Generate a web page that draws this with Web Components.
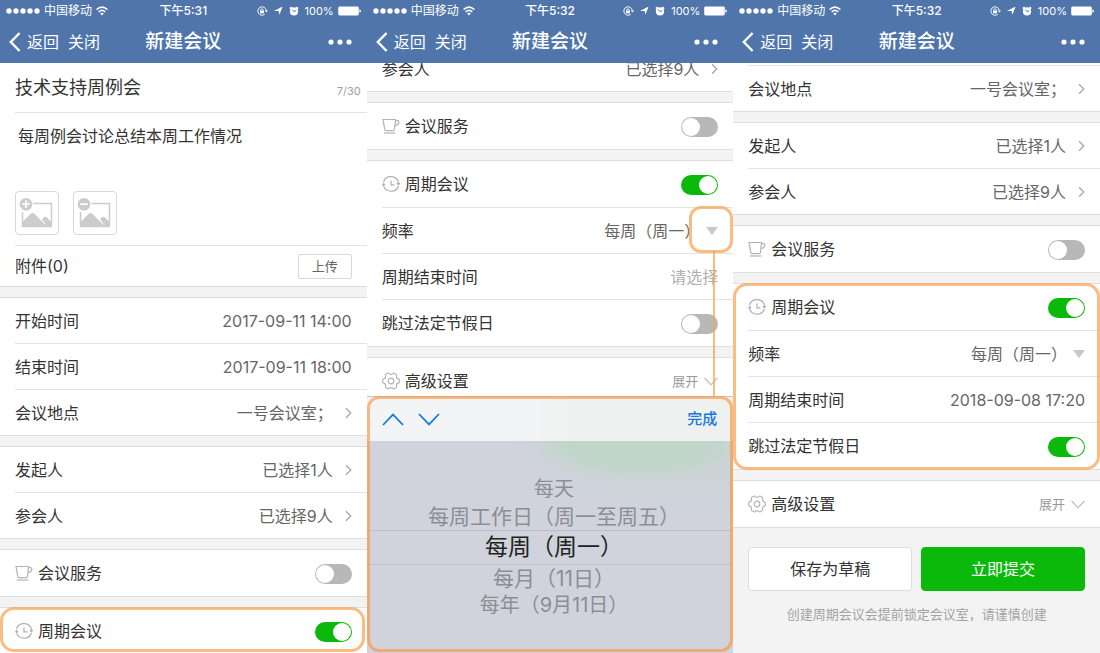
<!DOCTYPE html>
<html lang="zh-CN">
<head>
<meta charset="utf-8">
<meta name="viewport" content="width=device-width, initial-scale=1">
<title>新建会议</title>
<style>
  body {
    margin: 0;
    background: #f3f3f3;
    color: #333;
    font-family: Inter, "Noto Sans CJK SC", sans-serif;
    font-size: 16px;
    line-height: 24px;
  }
  main {
    display: grid;
    grid-template-columns: repeat(3, minmax(0, 1fr));
    height: 100vh;
  }
</style>
</head>
<body>
<main>
  <phone-screen time="下午5:31">
    <form-group flush>
      <title-row value="技术支持周例会" count="7/30"></title-row>
      <note-row value="每周例会讨论总结本周工作情况"></note-row>
      <upload-row>附件(0)</upload-row>
    </form-group>
    <form-group>
      <text-row value="2017-09-11 14:00">开始时间</text-row>
      <text-row value="2017-09-11 18:00">结束时间</text-row>
      <link-row value="一号会议室；">会议地点</link-row>
    </form-group>
    <form-group>
      <link-row value="已选择1人">发起人</link-row>
      <link-row value="已选择9人">参会人</link-row>
    </form-group>
    <form-group>
      <switch-row><ui-icon slot="icon" name="cup"></ui-icon>会议服务</switch-row>
    </form-group>
    <callout-frame style="--callout-inset: 0 2px 3px 0">
      <form-group>
        <switch-row on><ui-icon slot="icon" name="clock"></ui-icon>周期会议</switch-row>
      </form-group>
    </callout-frame>
  </phone-screen>

  <phone-screen time="下午5:32" style="--scrolled: 18px">
    <form-group>
      <link-row value="已选择9人">参会人</link-row>
    </form-group>
    <form-group>
      <switch-row><ui-icon slot="icon" name="cup"></ui-icon>会议服务</switch-row>
    </form-group>
    <form-group>
      <switch-row on><ui-icon slot="icon" name="clock"></ui-icon>周期会议</switch-row>
      <select-row value="每周（周一）" marked>频率</select-row>
      <text-row placeholder="请选择">周期结束时间</text-row>
      <switch-row>跳过法定节假日</switch-row>
    </form-group>
    <form-group>
      <expand-row><ui-icon slot="icon" name="gear"></ui-icon>高级设置</expand-row>
    </form-group>
    <wheel-picker slot="sheet"></wheel-picker>
  </phone-screen>

  <phone-screen time="下午5:32">
    <form-group flush>
      <link-row value="一号会议室；" continued>会议地点</link-row>
    </form-group>
    <form-group>
      <link-row value="已选择1人">发起人</link-row>
      <link-row value="已选择9人">参会人</link-row>
    </form-group>
    <form-group>
      <switch-row><ui-icon slot="icon" name="cup"></ui-icon>会议服务</switch-row>
    </form-group>
    <callout-frame>
      <form-group>
        <switch-row on><ui-icon slot="icon" name="clock"></ui-icon>周期会议</switch-row>
        <select-row value="每周（周一）">频率</select-row>
        <text-row value="2018-09-08 17:20">周期结束时间</text-row>
        <switch-row on>跳过法定节假日</switch-row>
      </form-group>
    </callout-frame>
    <form-group>
      <expand-row><ui-icon slot="icon" name="gear"></ui-icon>高级设置</expand-row>
    </form-group>
    <submit-bar>创建周期会议会提前锁定会议室，请谨慎创建</submit-bar>
  </phone-screen>
</main>

<script>
const ICONS = {
  cup: [18, 18, `<g fill="none" stroke="#b4b4b4" stroke-width="1.2"><path d="M1 2.5H13.6L12.4 12.6Q12.2 13.6 11.2 13.6H4Q3 13.6 2.8 12.6Z"/><path d="M13.5 3.6H15.4Q17 3.6 16.8 5.4Q16.4 8 13.2 8.6"/><path d="M2 16H13.4"/></g>`],
  clock: [18, 18, `<g fill="none" stroke="#b0b0b0" stroke-width="1.2"><path d="M1.5 7A7.8 7.8 0 0 1 16.6 8"/><path d="M16.4 11A7.8 7.8 0 0 1 1.4 10"/><path d="M9 5.4V9.8H12.4"/></g><path d="M14.3 8H18.4L16.4 10.8ZM-.2 10.2H3.6L1.6 7.4Z" fill="#b0b0b0"/>`],
  gear: [18, 18, `<g fill="none" stroke="#b4b4b4" stroke-width="1.2" stroke-linejoin="round"><path d="M5.6 1.2Q6.6.7 7.3 1.6Q9 3.2 10.7 1.6Q11.4.7 12.4 1.2L14 2.2Q14.8 2.8 14.5 3.8Q14 6.2 16.2 6.8Q17.3 7 17.3 8.1V9.9Q17.3 11 16.2 11.2Q14 11.8 14.5 14.2Q14.8 15.2 14 15.8L12.4 16.8Q11.4 17.3 10.7 16.4Q9 14.8 7.3 16.4Q6.6 17.3 5.6 16.8L4 15.8Q3.2 15.2 3.5 14.2Q4 11.8 1.8 11.2Q.7 11 .7 9.9V8.1Q.7 7 1.8 6.8Q4 6.2 3.5 3.8Q3.2 2.8 4 2.2Z"/><circle cx="9" cy="9" r="2.8"/></g>`],
  chevron: [7, 12, `<path d="M1 1.2 5.8 6 1 10.8" fill="none" stroke="#a8a8a8" stroke-width="1.3"/>`],
  expand: [14, 9, `<path d="M.6 1 7 7.8 13.4 1" fill="none" stroke="#bbb" stroke-width="1.1"/>`],
  triangle: [12, 8, `<path d="M0 0H12L6 8Z" fill="#c8c8c8"/>`],
  back: [12, 20, `<path d="M10.6 1 1.8 10 10.6 19" fill="none" stroke="#fff" stroke-width="2.4"/>`],
  more: [24, 6, `<g fill="#fff"><circle cx="3" cy="3" r="2.6"/><circle cx="12" cy="3" r="2.6"/><circle cx="21" cy="3" r="2.6"/></g>`],
  signal: [34, 6, `<g fill="#fff"><circle cx="3" cy="3" r="2.7"/><circle cx="10" cy="3" r="2.7"/><circle cx="17" cy="3" r="2.7"/><circle cx="24" cy="3" r="2.7"/><circle cx="31" cy="3" r="2.7"/></g>`],
  wifi: [12, 10, `<g fill="none" stroke="#fff" stroke-width="1.5"><path d="M.6 3.6Q6-1.4 11.4 3.6"/><path d="M2.7 6Q6 2.8 9.3 6"/></g><path d="M6 9.4 4.2 7.5Q6 6 7.8 7.5Z" fill="#fff"/>`],
  lock: [11, 10, `<path d="M9.2 4.2A4.2 4.2 0 1 0 7.8 8.2" fill="none" stroke="#fff"/><path d="M7.7 4.4H11L9.4 6.6Z" fill="#fff"/><rect x="3" y="4.5" width="4" height="2.8" fill="#fff"/><path d="M3.8 4.6V3.8Q3.8 2.8 5 2.8T6.2 3.8V4.6" fill="none" stroke="#fff" stroke-width=".8"/>`],
  locate: [9, 9, `<path d="M0 5 8.6.4 5.4 8.8 4.6 5Z" fill="#fff"/>`],
  alarm: [10, 10, `<circle cx="5" cy="5.4" r="4.1" fill="#fff"/><path d="M.8 2.6 2.6 1.2M9.2 2.6 7.4 1.2" stroke="#fff" stroke-width="1.5"/><path d="M3.4 3.6 5 5.6 7.2 4.6" fill="none" stroke="#4f75aa" stroke-width="1"/>`],
  battery: [23, 10, `<rect x=".2" y=".5" width="20.6" height="9" rx="1.4" fill="#fff"/><path d="M21.4 3.3Q23 3.7 23 5T21.4 6.7Z" fill="#fff"/>`],
  photoAdd: [42, 42, `<path d="M17.4 11.5H35.5V34M6.5 34V20" fill="none" stroke="#ccc" stroke-width="1.5"/><path d="M6 30.5 14.5 21.9Q16.5 20 18.6 21.9L29 32.4H30L26 27.8Q28.2 23.2 31 25.4L36 30.5V35.3H6Z" fill="#ccc"/><circle cx="10" cy="12.2" r="6.3" fill="#ccc"/><path d="M6.2 12.2H13.8M10 8.4V16" stroke="#fff" stroke-width="1.7"/>`],
  photoRemove: [42, 42, `<path d="M17.4 11.5H35.5V34M6.5 34V20" fill="none" stroke="#ccc" stroke-width="1.5"/><path d="M6 30.5 14.5 21.9Q16.5 20 18.6 21.9L29 32.4H30L26 27.8Q28.2 23.2 31 25.4L36 30.5V35.3H6Z" fill="#ccc"/><circle cx="10" cy="12.2" r="6.3" fill="#ccc"/><path d="M6.2 12.2H13.8" stroke="#fff" stroke-width="1.7"/>`],
  up: [22, 13, `<path d="M1 12 11 1.6 21 12" fill="none" stroke="#1579e0" stroke-width="1.7"/>`],
  down: [22, 13, `<path d="M1 1 11 11.4 21 1" fill="none" stroke="#1579e0" stroke-width="1.7"/>`]
};

const RESET = `
  * { box-sizing: border-box; }
  button, input, textarea, select {
    margin: 0; padding: 0; border: 0; border-radius: 0; background: none;
    color: inherit; font: inherit; appearance: none; outline: none;
  }
  button { display: flex; align-items: center; cursor: pointer; }
`;

class BaseElement extends HTMLElement {
  constructor() {
    super();
    this.attachShadow({ mode: 'open' });
  }
  connectedCallback() {
    this.shadowRoot.innerHTML = `<style>${RESET}${this.styles()}</style>${this.markup()}`;
  }
  attr(name) { return this.getAttribute(name) || ''; }
  styles() { return ''; }
  markup() { return '<slot></slot>'; }
}

class UiIcon extends BaseElement {
  styles() { return `:host { display: inline-flex; flex: none; } svg { display: block; overflow: visible; }`; }
  markup() {
    const [w, h, body] = ICONS[this.attr('name')];
    return `<svg width="${w}" height="${h}" viewBox="0 0 ${w} ${h}" aria-hidden="true">${body}</svg>`;
  }
}

class StatusBar extends BaseElement {
  styles() {
    return `
      :host { display: grid; grid-template-columns: 1fr auto 1fr; align-items: center; height: 21px; padding: 0 6px; font-size: 12px; line-height: 20px; }
      div { display: flex; align-items: center; gap: 4px; }
      .right { justify-content: flex-end; gap: 6px; }
      .power { font-size: 11px; }
      time { font-weight: 500; }`;
  }
  markup() {
    return `
      <div><ui-icon name="signal"></ui-icon><span>中国移动</span><ui-icon name="wifi"></ui-icon></div>
      <time>${this.attr('time')}</time>
      <div class="right">
        <ui-icon name="lock"></ui-icon><ui-icon name="locate"></ui-icon><ui-icon name="alarm"></ui-icon>
        <div class="power"><span>100%</span><ui-icon name="battery"></ui-icon></div>
      </div>`;
  }
}

class NavBar extends BaseElement {
  styles() {
    return `
      :host { display: grid; grid-template-columns: 1fr auto 1fr; align-items: center; height: 42px; font-size: 16px; }
      .left { display: flex; gap: 9px; padding-left: 9px; }
      .back { gap: 6px; }
      h1 { margin: 0; font-size: 19px; font-weight: 500; }
      .more { justify-self: end; padding-right: 15px; }`;
  }
  markup() {
    return `
      <div class="left">
        <button class="back" type="button"><ui-icon name="back"></ui-icon>返回</button>
        <button type="button">关闭</button>
      </div>
      <h1>新建会议</h1>
      <button class="more" type="button" aria-label="更多"><ui-icon name="more"></ui-icon></button>`;
  }
}

class PhoneScreen extends BaseElement {
  styles() {
    return `
      :host { display: flex; flex-direction: column; position: relative; overflow: hidden; min-width: 0; background: #f3f3f3; }
      header { background: #4f75aa; color: #fff; }
      .view { flex: 1; min-height: 0; overflow: hidden; }
      .content { display: flex; flex-direction: column; gap: 10px; margin-top: calc(0px - var(--scrolled, 0px)); }`;
  }
  markup() {
    return `
      <header><status-bar time="${this.attr('time')}"></status-bar><nav-bar></nav-bar></header>
      <div class="view"><div class="content"><slot></slot></div></div>
      <slot name="sheet"></slot>`;
  }
}

class FormGroup extends BaseElement {
  styles() {
    return `
      :host { display: block; background: #fff; border: solid #dedede; border-width: 1px 0; }
      :host([flush]) { border-top: 0; }`;
  }
}

class CalloutFrame extends BaseElement {
  styles() {
    return `
      :host { display: block; position: relative; }
      :host::after { content: ""; position: absolute; inset: var(--callout-inset, 0); border: 3px solid rgba(250, 160, 80, .7); border-radius: 14px; pointer-events: none; }`;
  }
}

/* A settings line: optional icon and label on the left, a control on the right. */
class RowElement extends BaseElement {
  styles() {
    return `
      :host { display: block; position: relative; padding-left: 15px; }
      .row { display: flex; align-items: center; justify-content: space-between; gap: 12px; height: 45px; padding-right: 15px; }
      :host(:not(:first-child)) .row, :host([continued]) .row { border-top: 1px solid #e3e3e3; height: 46px; }
      .name { display: flex; align-items: center; flex: none; gap: 5px; }
      .value { color: #666; }
      ${this.extra()}`;
  }
  extra() { return ''; }
  control() { return ''; }
  markup() {
    return `<div class="row"><label class="name" for="control"><slot name="icon"></slot><span><slot></slot></span></label>${this.control()}</div>`;
  }
}

class TextRow extends RowElement {
  extra() {
    return `
      input { flex: 1; min-width: 0; text-align: right; }
      input::placeholder { color: #b0b0b0; opacity: 1; }`;
  }
  control() {
    return `<input class="value" id="control" type="text" value="${this.attr('value')}" placeholder="${this.attr('placeholder')}">`;
  }
}

class LinkRow extends RowElement {
  extra() {
    return `
      :host([continued]) { padding-top: 2px; }
      .value { gap: 12px; }`;
  }
  control() {
    return `<button class="value" id="control" type="button">${this.attr('value')}<ui-icon name="chevron"></ui-icon></button>`;
  }
}

class SelectRow extends RowElement {
  extra() {
    return `
      .pick { display: flex; align-items: center; gap: 6px; }
      select { text-align-last: right; }
      :host([marked]) { z-index: 1; }
      .mark { position: absolute; right: 0; top: -1px; bottom: 0; width: 44px; border: 3px solid rgba(250, 160, 80, .7); border-radius: 12px; pointer-events: none; }
      .mark::after { content: ""; position: absolute; top: 100%; left: 21px; width: 2px; height: 146px; background: rgba(250, 160, 80, .7); }`;
  }
  control() {
    const mark = this.hasAttribute('marked') ? '<span class="mark"></span>' : '';
    return `<span class="pick value"><select id="control"><option>${this.attr('value')}</option></select><ui-icon name="triangle"></ui-icon></span>${mark}`;
  }
}

class SwitchRow extends RowElement {
  extra() {
    return `
      .row { height: 46px; }
      :host(:not(:first-child)) .row { height: 47px; }
      input { flex: none; width: 37px; height: 20px; margin-top: 2px; padding: 1px; border-radius: 10px; background: #b8b8b8; }
      input::before { content: ""; display: block; width: 18px; height: 18px; border-radius: 50%; background: #fff; }
      input:checked { background: #0bb90b; }
      input:checked::before { margin-left: 17px; }`;
  }
  control() {
    return `<input id="control" type="checkbox" role="switch" ${this.hasAttribute('on') ? 'checked' : ''}>`;
  }
}

class ExpandRow extends RowElement {
  extra() {
    return `
      .row { height: 46px; }
      button { gap: 6px; color: #999; font-size: 13px; }`;
  }
  control() {
    return `<button id="control" type="button">展开<ui-icon name="expand"></ui-icon></button>`;
  }
}

class TitleRow extends BaseElement {
  styles() {
    return `
      :host { display: block; padding-left: 15px; }
      div { display: flex; align-items: center; height: 49px; padding-right: 6px; }
      input { flex: 1; min-width: 0; font-size: 18px; }
      span { padding-top: 6px; color: #a0a0a0; font-size: 11px; }`;
  }
  markup() {
    return `<div><input type="text" aria-label="会议主题" value="${this.attr('value')}"><span>${this.attr('count')}</span></div>`;
  }
}

class NoteRow extends BaseElement {
  styles() {
    return `
      :host { display: block; padding-left: 15px; }
      .note { border-top: 1px solid #e3e3e3; padding-bottom: 10px; }
      textarea { display: block; width: 100%; height: 78px; padding: 11px 3px 0; resize: none; overflow: hidden; }
      .photos { display: flex; gap: 14px; }
      .photos button { width: 44px; height: 44px; border: 1px solid #d8d8d8; border-radius: 4px; }`;
  }
  markup() {
    return `
      <div class="note">
        <textarea aria-label="会议内容">${this.attr('value')}</textarea>
        <div class="photos">
          <button type="button" aria-label="添加图片"><ui-icon name="photoAdd"></ui-icon></button>
          <button type="button" aria-label="删除图片"><ui-icon name="photoRemove"></ui-icon></button>
        </div>
      </div>`;
  }
}

class UploadRow extends RowElement {
  extra() {
    return `
      :host(:not(:first-child)) .row { height: 41px; }
      button { justify-content: center; width: 54px; height: 25px; border: 1px solid #d8d8d8; border-radius: 2px; color: #666; font-size: 13px; }`;
  }
  control() { return `<button id="control" type="button">上传</button>`; }
}

class WheelPicker extends BaseElement {
  styles() {
    return `
      :host { display: flex; flex-direction: column; position: absolute; left: 0; right: 0; bottom: 0; height: 256px; border-top: 1px solid #c4c6ca; background: #d0d3dc; }
      :host::after { content: ""; position: absolute; inset: -1px 0 1px; border: 3px solid rgba(250, 150, 60, .65); border-radius: 12px; pointer-events: none; }
      .bar { display: flex; align-items: center; gap: 14px; height: 44px; padding: 0 16px 0 15px; background: linear-gradient(90deg, #f3f4f5 45%, #eef1f0 55%); }
      .done { margin-left: auto; color: #1579e0; font-size: 15px; font-weight: 500; }
      fieldset { flex: 1; display: flex; flex-direction: column; min-width: 0; margin: 0; border: 0; padding: 35px 0 0; text-align: center; color: #8b8e94;
        background: radial-gradient(ellipse 30% 40px at 74% 0, #bfd6c8 60%, transparent 100%), radial-gradient(ellipse 45% 80px at 85% 0, #cad4d4, transparent); }
      label { display: block; height: 27px; padding-left: 8px; line-height: 27px; font-size: 21px; }
      label.edge { font-size: 20px; }
      label:has(:checked) { height: 35px; border: solid #bcbfc7; border-width: 1px 0; color: #222; font-size: 23px; line-height: 33px; }
      input { position: absolute; width: 0; height: 0; }`;
  }
  markup() {
    return `
      <div class="bar">
        <button type="button" aria-label="上一项"><ui-icon name="up"></ui-icon></button>
        <button type="button" aria-label="下一项"><ui-icon name="down"></ui-icon></button>
        <button class="done" type="button">完成</button>
      </div>
      <fieldset aria-label="频率">
        <label class="edge"><input type="radio" name="rate">每天</label>
        <label><input type="radio" name="rate">每周工作日（周一至周五）</label>
        <label><input type="radio" name="rate" checked>每周（周一）</label>
        <label><input type="radio" name="rate">每月（11日）</label>
        <label class="edge"><input type="radio" name="rate">每年（9月11日）</label>
      </fieldset>`;
  }
}

class SubmitBar extends BaseElement {
  styles() {
    return `
      :host { display: block; padding: 9px 15px 0; text-align: center; }
      div { display: flex; gap: 9px; }
      button { flex: 1; justify-content: center; height: 44px; border: 1px solid #dedede; border-radius: 4px; background: #fff; }
      button.primary { border-color: #0bb90b; background: #0bb90b; color: #fff; }
      p { margin: 11px 0 0; color: #a3a3a3; font-size: 13px; }`;
  }
  markup() {
    return `<div><button type="button">保存为草稿</button><button class="primary" type="submit">立即提交</button></div><p><slot></slot></p>`;
  }
}

for (const [name, type] of Object.entries({
  'ui-icon': UiIcon, 'status-bar': StatusBar, 'nav-bar': NavBar, 'phone-screen': PhoneScreen,
  'form-group': FormGroup, 'callout-frame': CalloutFrame, 'text-row': TextRow, 'link-row': LinkRow,
  'select-row': SelectRow, 'switch-row': SwitchRow, 'expand-row': ExpandRow, 'title-row': TitleRow,
  'note-row': NoteRow, 'upload-row': UploadRow, 'wheel-picker': WheelPicker, 'submit-bar': SubmitBar
})) customElements.define(name, type);
</script>
</body>
</html>
